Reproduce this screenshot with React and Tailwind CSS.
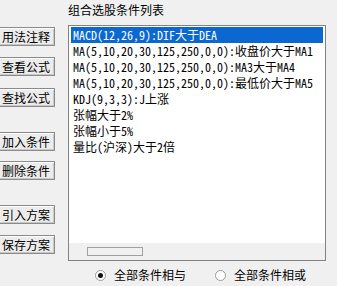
import React from "react";

const buttons = [
  { t: "用法注释", mt: "mt-[27px]" },
  { t: "查看公式", mt: "mt-[11px]" },
  { t: "查找公式", mt: "mt-[12px]" },
  { t: "加入条件", mt: "mt-[25px]" },
  { t: "删除条件", mt: "mt-[10px]" },
  { t: "引入方案", mt: "mt-[25px]" },
  { t: "保存方案", mt: "mt-[11px]" },
];

const rows = [
  "MACD(12,26,9):DIF大于DEA",
  "MA(5,10,20,30,125,250,0,0):收盘价大于MA1",
  "MA(5,10,20,30,125,250,0,0):MA3大于MA4",
  "MA(5,10,20,30,125,250,0,0):最低价大于MA5",
  "KDJ(9,3,3):J上涨",
  "张幅大于2%",
  "张幅小于5%",
  "量比(沪深)大于2倍",
];

function Radio({ checked, label }) {
  return (
    <div className="flex items-center">
      <div className="w-[11px] h-[11px] rounded-full border border-[#9a9a9a] bg-white flex items-center justify-center">
        {checked && <div className="w-[5px] h-[5px] rounded-full bg-[#111]" />}
      </div>
      <span className="ml-[8px] text-[12px] leading-[16px] text-black">{label}</span>
    </div>
  );
}

export default function App() {
  return (
    <div className="w-[337px] h-[286px] bg-[#f0f0f0] flex overflow-hidden font-['Noto_Sans_CJK_SC',sans-serif] text-black">
      <div className="w-[68px] flex flex-col shrink-0">
        {buttons.map((b) => (
          <div
            key={b.t}
            className={`${b.mt} ml-[-3px] w-[58px] h-[19px] border border-[#8a8a8a] bg-[#ececec] shadow-[inset_1px_1px_0_#ffffff,inset_-1px_-1px_0_#c8c8c8] flex items-center justify-center text-[12px] leading-none`}
          >
            {b.t}
          </div>
        ))}
      </div>
      <div className="flex flex-col w-[258px]">
        <div className="h-[25px] pt-[3px] text-[12px] leading-[14px]">组合选股条件列表</div>
        <div className="h-[236px] border border-[#828282] bg-white flex flex-col">
          <div className="flex-1 pt-[1px] px-[2px] font-['Noto_Sans_Mono_CJK_SC','Liberation_Mono',monospace] text-[12px]">
            {rows.map((r, i) => (
              <div
                key={i}
                className={`h-[16px] leading-[16px] pl-[2px] whitespace-nowrap overflow-hidden ${
                  i === 0 ? "bg-[#0a68d0] text-white" : "text-black"
                }`}
              >
                {r}
              </div>
            ))}
          </div>
          <div className="h-[17px] bg-[#f0f0f0] flex items-center pl-[18px]">
            <div className="w-[56px] h-[9px] border border-[#a0a0a0] bg-[#f0f0f0]" />
          </div>
        </div>
        <div className="flex items-center mt-[6px] pl-[27px]">
          <Radio checked label="全部条件相与" />
          <div className="ml-[29px]">
            <Radio label="全部条件相或" />
          </div>
        </div>
      </div>
    </div>
  );
}
